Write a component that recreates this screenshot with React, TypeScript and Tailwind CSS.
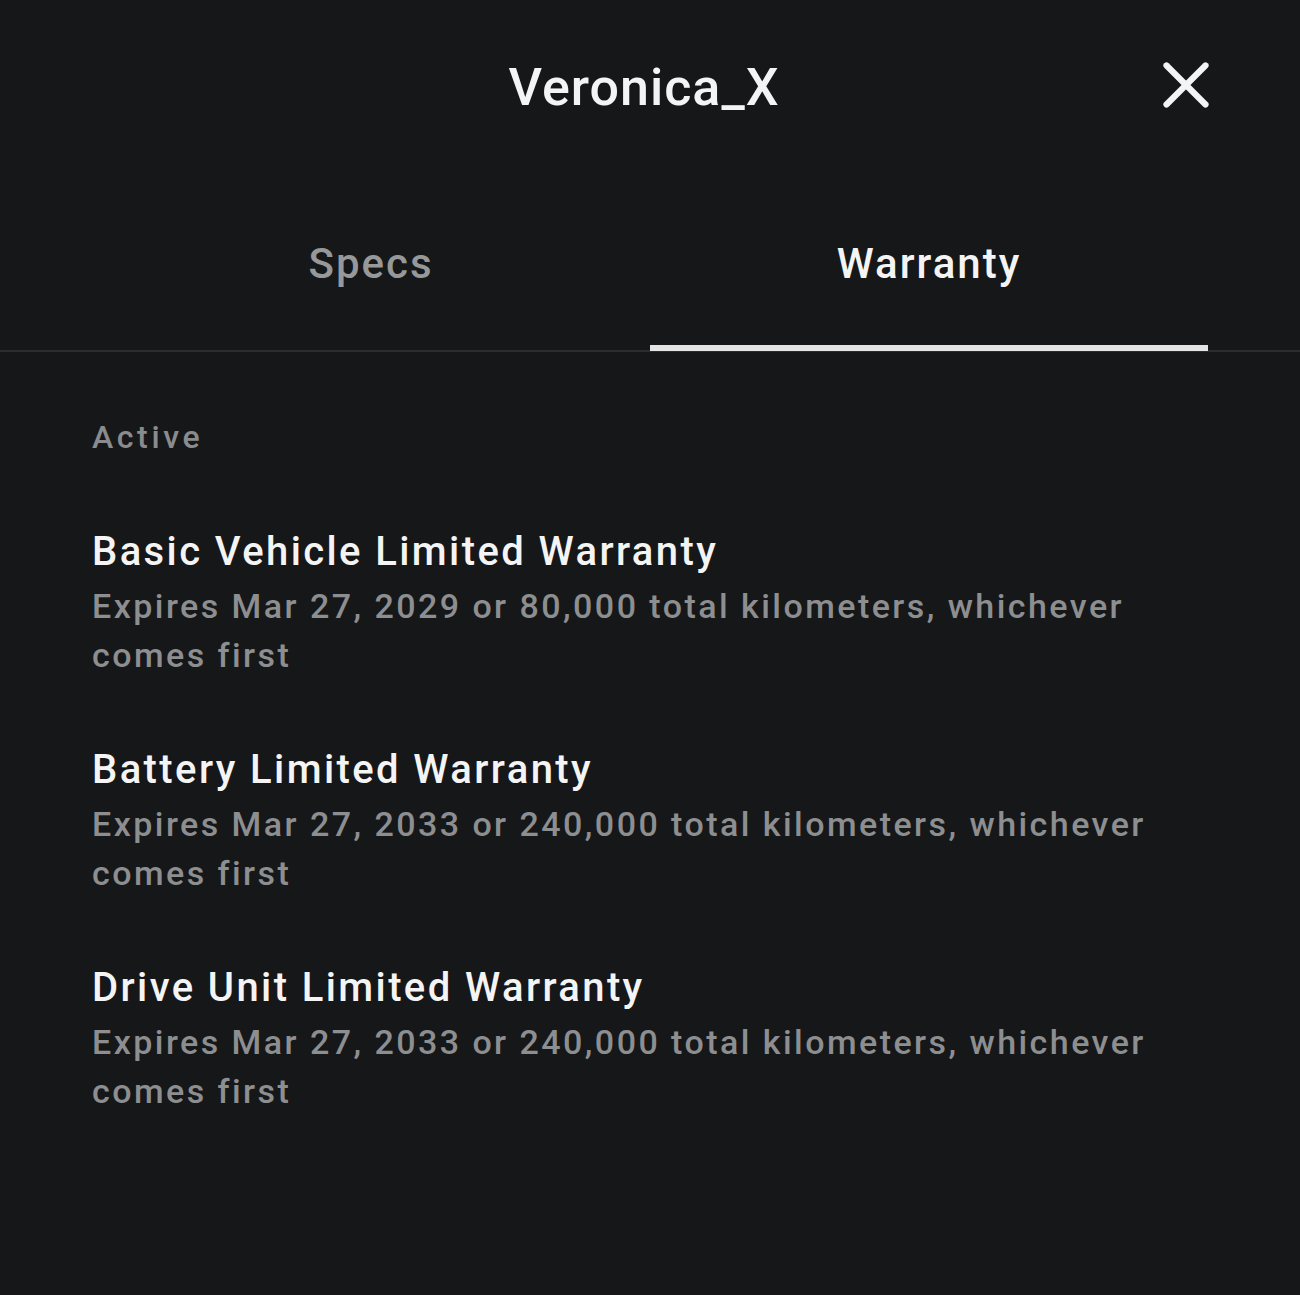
import { X } from "lucide-react";

const warranties = [
  {
    title: "Basic Vehicle Limited Warranty",
    detail: "Expires Mar 27, 2029 or 80,000 total kilometers, whichever comes first",
  },
  {
    title: "Battery Limited Warranty",
    detail: "Expires Mar 27, 2033 or 240,000 total kilometers, whichever comes first",
  },
  {
    title: "Drive Unit Limited Warranty",
    detail: "Expires Mar 27, 2033 or 240,000 total kilometers, whichever comes first",
  },
];

export default function App() {
  return (
    <div className="min-h-[1295px] bg-[#161719] font-['Roboto','Liberation_Sans',sans-serif] text-white">
      {/* Header */}
      <div className="relative h-[176px] flex items-center justify-center pr-[12px]">
        <h1 className="text-[52px] font-medium tracking-[1px] text-[#f4f4f4]">Veronica_X</h1>
        <button className="absolute right-[75px] top-[46px] w-[78px] h-[78px] flex items-center justify-center text-[#f4f4f4]">
          <X size={78} strokeWidth={1.9} />
        </button>
      </div>

      {/* Tabs */}
      <div className="border-b-2 border-[#2c2d30]">
        <div className="mx-[92px] flex">
          <Tab label="Specs" />
          <Tab label="Warranty" active />
        </div>
      </div>

      {/* Content */}
      <div className="px-[92px] pt-[65px]">
        <div className="text-[32px] leading-[40px] font-medium tracking-[3.6px] text-[#8a8b8d]">Active</div>
        <div className="mt-[71px] space-y-[66px]">
          {warranties.map((w) => (
            <WarrantyItem key={w.title} title={w.title} detail={w.detail} />
          ))}
        </div>
      </div>
    </div>
  );
}

function Tab({ label, active }: { label: string; active?: boolean }) {
  return (
    <div className="relative flex-1 h-[174px] flex items-center justify-center">
      <span className={`text-[42px] font-medium tracking-[2px] ${active ? "text-[#f4f4f4]" : "text-[#97989a]"}`}>{label}</span>
      {active && <div className="absolute left-0 right-0 bottom-[-1px] h-[6px] bg-[#e4e4e4]" />}
    </div>
  );
}

function WarrantyItem({ title, detail }: { title: string; detail: string }) {
  return (
    <div>
      <div className="text-[40px] leading-[48px] font-medium tracking-[2.4px] text-[#f4f4f4]">{title}</div>
      <div className="mt-[6px] text-[34px] leading-[49px] font-medium tracking-[2.45px] text-[#8d8e90]">{detail}</div>
    </div>
  );
}
